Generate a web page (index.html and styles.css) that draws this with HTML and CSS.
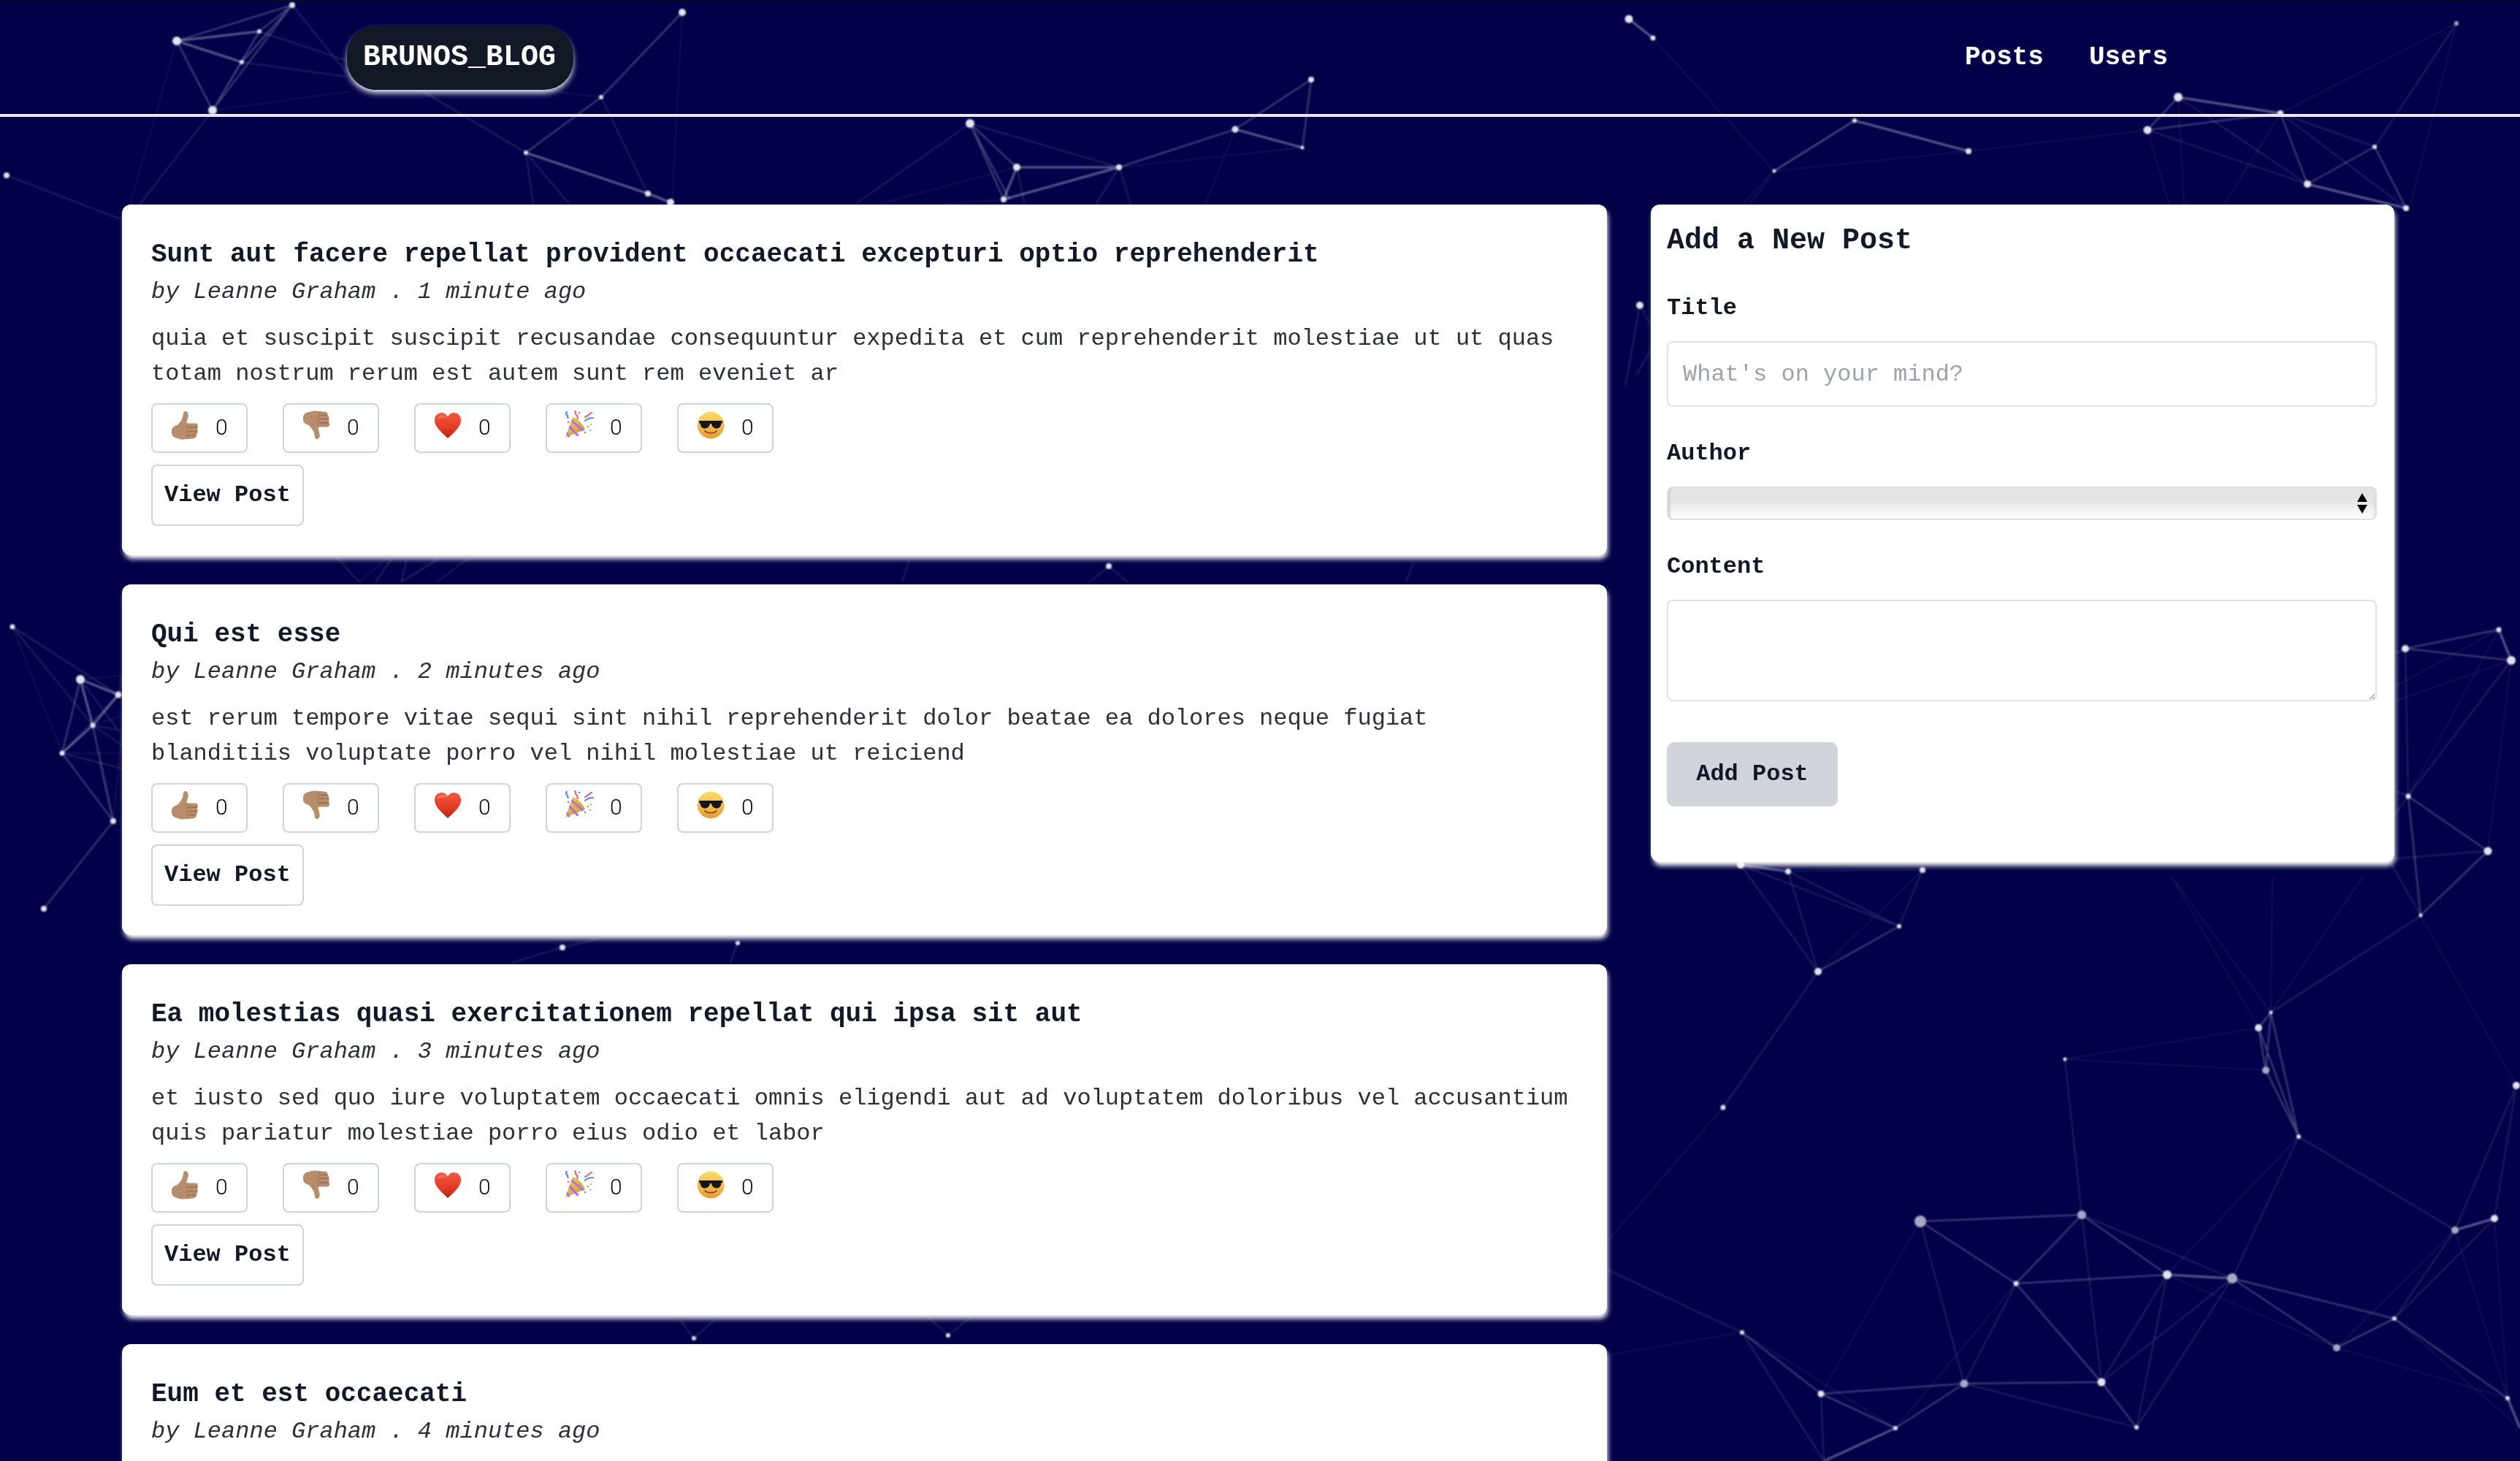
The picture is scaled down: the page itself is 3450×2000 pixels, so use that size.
FILE: index.html
```html
<!DOCTYPE html>
<html lang="en">
<head>
<meta charset="utf-8">
<title>Brunos Blog</title>
<link rel="stylesheet" href="styles.css">
</head>
<body>
<svg class="sprite" aria-hidden="true">
  <defs>
    <linearGradient id="heart-fill" x1="0" y1="0" x2="0" y2="1"><stop offset="0" stop-color="#f4593f"/><stop offset=".6" stop-color="#e23a27"/><stop offset="1" stop-color="#b81d10"/></linearGradient>
    <linearGradient id="face-fill" x1="0" y1="0" x2="0" y2="1"><stop offset="0" stop-color="#fbdc66"/><stop offset="1" stop-color="#eb9a35"/></linearGradient>
    <linearGradient id="cone-fill" x1="0" y1="0" x2="1" y2="1"><stop offset="0" stop-color="#f2cf62"/><stop offset="1" stop-color="#c9962c"/></linearGradient>
    <symbol id="e-up" viewBox="2 0.500 34 35.500">
      <path fill="#b88d6c" d="M3 25c0-3 2-5 5-6 3-1 6-5 8-9 1-3 1-7 2-8 3-2 6 1 5 6l-2 8h11c2 0 3 1.500 3 3 0 1-.5 2-1 3 1 1 1 3 0 4 .5 1 .5 3-1 4 .5 2-1 4-3 4.500l-12 1c-3 .5-6-.5-8-1.500-4 0-7-3-7-7z"/>
      <path fill="none" stroke="#8b6346" stroke-width="1" stroke-linecap="round" d="M23 21h11M23 26h11M23 30.500h9"/>
      <path fill="none" stroke="#a17a5b" stroke-width="1" stroke-linecap="round" d="M22 16c-1 4-2 12 1 18"/>
    </symbol>
    <symbol id="e-heart" viewBox="0 0 40 40">
      <path fill="url(#heart-fill)" d="M20 38C8 27 2 21 2 13 2 7 6 3 11.500 3 15 3 18.500 5 20 8.500 21.500 5 25 3 28.500 3 34 3 38 7 38 13c0 8-6 14-18 25z"/>
      <path fill="#ffffff" opacity=".2" d="M6 12c0-3 3-6 6-6 3 0 5 2 6 4-4-1-8 0-12 2z"/>
    </symbol>
    <symbol id="e-party" viewBox="0 0 40 40">
      <path fill="url(#cone-fill)" d="M1 37 11 9c6 1 14 9 17 17z"/>
      <path fill="#b76ce0" d="m3.500 29 4 7-2 .7-3.200-4.600zM7 20l13 14-3 1.300L5.800 23.500zM10 12l17 15-3 1.500L9 15z"/>
      <path fill="none" stroke="#5b86e6" stroke-width="2" stroke-linecap="round" d="M2 2c3 0-2 3 1 4s-1 3 2 4M28 14c3-3 6-4 11-4"/>
      <path fill="none" stroke="#e0607e" stroke-width="2" stroke-linecap="round" d="M14 1c3 2-1 3 2 5s0 3 2 5M28 9c1-2 3 0 3-2s3 0 3-2 2-1 3-2"/>
      <circle cx="32" cy="22" r="1.500" fill="#e8a34a"/><circle cx="35" cy="27" r="1.300" fill="#ea9ab0"/><circle cx="28" cy="30" r="1.200" fill="#5b86e6"/><circle cx="36" cy="19" r="1.200" fill="#e8a34a"/><circle cx="20" cy="3" r="1.200" fill="#5b86e6"/><circle cx="5" cy="16" r="1.300" fill="#e0607e"/>
    </symbol>
    <symbol id="e-cool" viewBox="0 0 40 40">
      <circle cx="20" cy="20" r="18.500" fill="url(#face-fill)"/>
      <path fill="#15151a" d="M4 14h32v3l-1.500.5c-.5 4.500-3 7-6.500 7s-6.500-2.500-7-6.500h-2c-.5 4-3.500 6.500-7 6.500S5.900 22 5.500 17.500L4 17z"/>
      <path fill="none" stroke="#7a4a18" stroke-width="1.800" stroke-linecap="round" d="M12 28c3 3.500 13 3.500 16 0"/>
    </symbol>
  </defs>
</svg>

<svg class="network" viewBox="0 0 3450 2000" preserveAspectRatio="none" aria-hidden="true">
  <path class="line-faint" d="M17 858L85 1031M155 1124L167 1000M291 151L480 125M823 133L760 125M934 17L920 280M242 56L178 280M1392 229L1200 280M1691 177L1650 280M1374 273L1290 280M1532 229L1783 202M2429 234L2385 280M2429 234L2395 280M2695 207L2940 178M2429 234L2695 207M2263 52L2429 234M3363 32L3122 155M3363 32L3300 280M3122 155L3045 280M2940 178L2970 280M2982 133L2990 280M3421 862L3278 940M3438 904L3278 960M3421 862L3297 1090M3438 904L3406 1165M3109 1386L2973 1200M3092 1407L2973 1200M3109 1386L3111 1200M3109 1386L3235 1200M3092 1407L2827 1450M3102 1465L2827 1450M3314 1254L3445 1486M2359 1516L2200 1700M2489 1330L2632 1191M2448 1193L2632 1191M3361 1684L3199 1845M3361 1684L3433 1914M3415 1668L3433 1914M2967 1745L3199 1845M3199 1845L3433 1914M3147 1556L2967 1745M2629 1672L2493 1908M2760 1757L2595 1955M2385 1824L2595 1955M2385 1824L2200 1855M3278 1805L3450 1955M162 951L167 925M110 930L167 925M127 993L167 980M85 1031L167 1031M155 1124L135 1040M528 765L492 797"/>
  <path class="line-soft" d="M17 858L162 951M17 858L127 993M110 930L162 1000M85 1031L167 1052M127 993L167 1020M127 993L167 1000M331 85L475 105M355 43L475 83M400 7L475 100M85 1031L162 951M720 209L730 280M720 209L780 280M823 133L887 265M574 122L720 209M9 240L165 300M291 151L191 280M1328 169L1170 280M1532 229L1500 280M1532 229L1548 280M1403 280L1392 229M1532 229L1328 169M2429 234L2539 165M2982 133L3159 252M2940 178L3159 252M3122 155L3251 201M3122 155L3294 285M3363 32L3251 201M3293 888L3297 1090M3297 1090L3438 904M3293 888L3278 895M3270 1176L3406 1165M3270 1176L3314 1253M3297 1090L3278 1082M3297 1090L3278 1115M2489 1330L2383 1184M2489 1330L2448 1193M2600 1268L2383 1184M2600 1268L2448 1193M2600 1268L2632 1191M2489 1330L2359 1516M3109 1386L3314 1254M3147 1556L3056 1750M3147 1556L3361 1684M2827 1450L2850 1663M3361 1684L3278 1805M3415 1668L3278 1805M3445 1486L3361 1684M3445 1486L3415 1668M2850 1663L2877 1892M2850 1663L3056 1750M2629 1672L2689 1894M2760 1757L2689 1894M2967 1745L2877 1892M2967 1745L2925 1954M3056 1750L2877 1892M3056 1750L2925 1954M2689 1894L2925 1954M2385 1824L2497 2000M2493 1908L2497 2000M2385 1824L2200 1738M536 765L514 797M557 765L549 797M600 765L549 797M640 765L598 797M1245 765L1235 797M1935 770L1925 797M460 762L492 797M2245 418L2260 445M2240 513L2260 480M2245 418L2225 530M770 1297L700 1318M770 1297L820 1285M1010 1291L1000 1318M1518 775L1490 798M1518 775L1545 798M950 1832L930 1805M950 1832L980 1805M1298 1828L1270 1802M1298 1828L1330 1802"/>
  <path class="line-mid" d="M242 56L400 7M355 43L400 7M331 85L400 7M291 151L400 7M291 151L355 43M291 151L331 85M242 56L291 151M934 17L823 133M823 133L720 209M110 930L85 1031M127 993L155 1124M85 1031L155 1124M155 1124L60 1244M1328 169L1392 229M1328 169L1374 273M1328 169L1382 273M1532 229L1691 177M1691 177L1795 109M1795 109L1783 202M2539 165L2429 234M2982 133L2940 178M2940 178L3122 155M3122 155L3159 252M3159 252L3251 201M3251 201L3294 285M3293 888L3421 862M3293 888L3438 904M3297 1090L3406 1165M3297 1090L3314 1253M3406 1165L3314 1253M2489 1330L2600 1268M3109 1386L3092 1407M3109 1386L3102 1465M3092 1407L3102 1465M3092 1407L3147 1556M3102 1465L3147 1556M3109 1386L3147 1556M3278 1805L3433 1914M3199 1845L3278 1805M3056 1750L3278 1805M3056 1750L3199 1845M2629 1672L2850 1663M2629 1672L2760 1757M2760 1757L2850 1663M2850 1663L2967 1745M2760 1757L2967 1745M2760 1757L2877 1892M2689 1894L2877 1892M2493 1908L2689 1894M2493 1908L2595 1955M2385 1824L2493 1908M2689 1894L2595 1955M2877 1892L2925 1954"/>
  <path class="line-bright" d="M242 56L355 43M242 56L331 85M720 209L887 265M887 265L918 277M110 930L162 951M110 930L127 993M85 1031L127 993M127 993L162 951M1392 229L1532 229M1392 229L1374 273M1532 229L1374 273M1691 177L1783 202M2230 26L2263 52M2539 165L2695 207M2982 133L3122 155M3159 252L3294 285M3421 862L3438 904M3361 1684L3415 1668M2967 1745L3056 1750M2595 1955L2497 2000M2383 1184L2448 1193M3433 1914L3450 1955"/>
  <g class="node">
    <circle cx="400" cy="7" r="4"/><circle cx="242" cy="56" r="6"/><circle cx="355" cy="43" r="3"/><circle cx="331" cy="85" r="3"/><circle cx="291" cy="151" r="6"/><circle cx="934" cy="17" r="5"/><circle cx="823" cy="133" r="3"/><circle cx="720" cy="209" r="3"/><circle cx="887" cy="265" r="4"/><circle cx="918" cy="277" r="5"/><circle cx="9" cy="240" r="4"/>
    <circle cx="17" cy="858" r="3.500"/><circle cx="110" cy="930" r="6"/><circle cx="162" cy="951" r="4.500"/><circle cx="127" cy="993" r="3.500"/><circle cx="85" cy="1031" r="3.500"/><circle cx="155" cy="1124" r="4"/><circle cx="60" cy="1244" r="4"/>
    <circle cx="1328" cy="169" r="6"/><circle cx="1392" cy="229" r="5"/><circle cx="1532" cy="229" r="4"/><circle cx="1691" cy="177" r="4.500"/><circle cx="1795" cy="109" r="4"/><circle cx="1783" cy="202" r="2.500"/><circle cx="1374" cy="273" r="4"/>
    <circle cx="2230" cy="26" r="5.500"/><circle cx="2263" cy="52" r="3.500"/><circle cx="2429" cy="234" r="2.500"/><circle cx="2539" cy="165" r="3"/><circle cx="2695" cy="207" r="4"/><circle cx="2940" cy="178" r="5.500"/><circle cx="2982" cy="133" r="6"/><circle cx="3122" cy="155" r="4"/><circle cx="3251" cy="201" r="3"/><circle cx="3159" cy="252" r="5"/><circle cx="3294" cy="285" r="4"/><circle class="node-dim" cx="3363" cy="32" r="3"/>
    <circle cx="3293" cy="888" r="5"/><circle cx="3421" cy="862" r="3.500"/><circle cx="3438" cy="904" r="6"/><circle cx="3297" cy="1090" r="3.500"/><circle cx="3406" cy="1165" r="5.500"/><circle cx="3314" cy="1253" r="2.500"/>
    <circle cx="2383" cy="1184" r="5"/><circle cx="2448" cy="1193" r="4"/><circle cx="2632" cy="1191" r="4"/><circle cx="2489" cy="1330" r="5"/><circle cx="2600" cy="1268" r="3"/><circle cx="2359" cy="1516" r="3.500"/>
    <circle cx="3109" cy="1386" r="2.500"/><circle cx="3092" cy="1407" r="5"/><circle class="node-dim" cx="3102" cy="1465" r="5"/><circle cx="3147" cy="1556" r="3"/><circle cx="2827" cy="1450" r="2.500"/><circle cx="3445" cy="1486" r="5"/>
    <circle class="node-dim" cx="2629" cy="1672" r="8"/><circle class="node-dim" cx="2850" cy="1663" r="6"/><circle cx="2760" cy="1757" r="3.500"/><circle cx="2967" cy="1745" r="6"/><circle class="node-dim" cx="3056" cy="1750" r="7"/><circle class="node-dim" cx="3199" cy="1845" r="5"/><circle cx="3278" cy="1805" r="3"/><circle class="node-dim" cx="3361" cy="1684" r="5"/><circle cx="3415" cy="1668" r="5"/><circle cx="3433" cy="1914" r="3"/><circle cx="2385" cy="1824" r="3"/><circle cx="2493" cy="1908" r="4.500"/><circle class="node-dim" cx="2689" cy="1894" r="5.500"/><circle cx="2877" cy="1892" r="5.500"/><circle cx="2595" cy="1955" r="3"/><circle cx="2925" cy="1954" r="3"/>
    <circle cx="2245" cy="418" r="5"/><circle cx="1518" cy="775" r="4"/><circle cx="770" cy="1297" r="4"/><circle cx="1010" cy="1291" r="3"/><circle cx="950" cy="1832" r="3"/><circle cx="1298" cy="1828" r="3"/>
  </g>
</svg>

<header class="site-header">
  <div class="logo">BRUNOS_BLOG</div>
  <nav class="site-nav"><a href="#">Posts</a><a href="#">Users</a></nav>
</header>

<main class="layout">
  <section class="post-list">
    <article class="post-card">
      <h3 class="post-title">Sunt aut facere repellat provident occaecati excepturi optio reprehenderit</h3>
      <p class="post-meta">by Leanne Graham . 1 minute ago</p>
      <p class="post-body">quia et suscipit suscipit recusandae consequuntur expedita et cum reprehenderit molestiae ut ut quas totam nostrum rerum est autem sunt rem eveniet ar</p>
      <div class="reactions">
        <button class="reaction"><svg class="emoji"><use href="#e-up"/></svg><span>0</span></button>
        <button class="reaction"><svg class="emoji emoji-flip"><use href="#e-up"/></svg><span>0</span></button>
        <button class="reaction"><svg class="emoji"><use href="#e-heart"/></svg><span>0</span></button>
        <button class="reaction"><svg class="emoji"><use href="#e-party"/></svg><span>0</span></button>
        <button class="reaction"><svg class="emoji"><use href="#e-cool"/></svg><span>0</span></button>
      </div>
      <button class="view-post">View Post</button>
    </article>
    <article class="post-card">
      <h3 class="post-title">Qui est esse</h3>
      <p class="post-meta">by Leanne Graham . 2 minutes ago</p>
      <p class="post-body">est rerum tempore vitae sequi sint nihil reprehenderit dolor beatae ea dolores neque fugiat blanditiis voluptate porro vel nihil molestiae ut reiciend</p>
      <div class="reactions">
        <button class="reaction"><svg class="emoji"><use href="#e-up"/></svg><span>0</span></button>
        <button class="reaction"><svg class="emoji emoji-flip"><use href="#e-up"/></svg><span>0</span></button>
        <button class="reaction"><svg class="emoji"><use href="#e-heart"/></svg><span>0</span></button>
        <button class="reaction"><svg class="emoji"><use href="#e-party"/></svg><span>0</span></button>
        <button class="reaction"><svg class="emoji"><use href="#e-cool"/></svg><span>0</span></button>
      </div>
      <button class="view-post">View Post</button>
    </article>
    <article class="post-card">
      <h3 class="post-title">Ea molestias quasi exercitationem repellat qui ipsa sit aut</h3>
      <p class="post-meta">by Leanne Graham . 3 minutes ago</p>
      <p class="post-body">et iusto sed quo iure voluptatem occaecati omnis eligendi aut ad voluptatem doloribus vel accusantium quis pariatur molestiae porro eius odio et labor</p>
      <div class="reactions">
        <button class="reaction"><svg class="emoji"><use href="#e-up"/></svg><span>0</span></button>
        <button class="reaction"><svg class="emoji emoji-flip"><use href="#e-up"/></svg><span>0</span></button>
        <button class="reaction"><svg class="emoji"><use href="#e-heart"/></svg><span>0</span></button>
        <button class="reaction"><svg class="emoji"><use href="#e-party"/></svg><span>0</span></button>
        <button class="reaction"><svg class="emoji"><use href="#e-cool"/></svg><span>0</span></button>
      </div>
      <button class="view-post">View Post</button>
    </article>
    <article class="post-card post-card-cut">
      <h3 class="post-title">Eum et est occaecati</h3>
      <p class="post-meta">by Leanne Graham . 4 minutes ago</p>
    </article>
  </section>

  <aside class="form-card">
    <h2 class="form-title">Add a New Post</h2>
    <form>
      <div class="field">
        <label class="field-label" for="post-title">Title</label>
        <input class="text-input" id="post-title" type="text" placeholder="What's on your mind?">
      </div>
      <div class="field">
        <label class="field-label" for="post-author">Author</label>
        <div class="select-wrap">
          <select class="select-input" id="post-author"><option></option></select>
          <svg class="select-arrows" viewBox="0 0 14 28" aria-hidden="true"><path d="M7 0l7 12H0zM0 16h14L7 28z"/></svg>
        </div>
      </div>
      <div class="field field-last">
        <label class="field-label" for="post-content">Content</label>
        <textarea class="text-area" id="post-content"></textarea>
      </div>
      <button class="add-post" type="button">Add Post</button>
    </form>
  </aside>
</main>
</body>
</html>
```
FILE: styles.css
```css
* { box-sizing: border-box; }

html, body {
  height: 100%;
  margin: 0;
  overflow: hidden;
}

body {
  background: #010048;
  color: #111827;
  font-family: "Liberation Mono", "Courier New", monospace;
  font-size: 32px;
  line-height: 48px;
}

.sprite {
  position: absolute;
  width: 0;
  height: 0;
}

.network {
  position: fixed;
  inset: 0;
  width: 100%;
  height: 100%;
  filter: blur(1.2px);
}

.network path {
  fill: none;
  stroke: #d9d9f2;
}

.line-faint { stroke-width: 1.5; opacity: 0.11; }
.line-soft { stroke-width: 1.5; opacity: 0.2; }
.line-mid { stroke-width: 2; opacity: 0.32; }
.line-bright { stroke-width: 3; opacity: 0.42; }

.node circle { fill: #e4e4f0; }
.node .node-dim { fill: #a8a8c4; }

.site-header {
  position: relative;
  height: 160px;
  padding: 0 482px 0 475px;
  display: flex;
  align-items: center;
  justify-content: space-between;
  border-top: 1px solid #0b0b20;
  border-bottom: 4px solid #e8e8ee;
}

.logo {
  padding: 20px 24px 20px 22px;
  border-radius: 40px;
  background: #131827;
  color: #fff;
  font-size: 40px;
  font-weight: 700;
  box-shadow: 0 5px 8px -1px #fff;
}

.site-nav {
  display: flex;
  gap: 62px;
}

.site-nav a {
  color: #fff;
  font-size: 36px;
  font-weight: 700;
  text-decoration: none;
}

.layout {
  position: relative;
  display: grid;
  grid-template-columns: 2033px 1018px;
  gap: 60px;
  align-items: start;
  padding: 120px 0 0 167px;
}

.post-list {
  display: flex;
  flex-direction: column;
  gap: 40px;
}

.post-card,
.form-card {
  background: #fff;
  border-radius: 12px;
  box-shadow: 2px 6px 7px -1px #fff;
}

.post-card { padding: 40px; }
.post-card-cut { height: 480px; }

.post-title {
  margin: 0 0 -1px;
  padding-top: 1px;
  font-size: 36px;
  line-height: 56px;
  font-weight: 700;
}

.post-meta {
  margin: 0;
  font-style: italic;
  color: #2a2f3a;
}

.post-body {
  margin: 16px 0;
  color: #2a2f3a;
}

.reactions {
  display: flex;
  gap: 48px;
  margin-bottom: 16px;
}

.reaction {
  display: flex;
  align-items: center;
  gap: 22px;
  width: 132px;
  height: 68px;
  padding: 0 0 3px 24px;
  background: #fff;
  border: 2px solid #cbd5e1;
  border-radius: 8px;
  color: #020617;
  font-family: Roboto, "Liberation Sans", sans-serif;
  font-size: 30px;
  font-weight: 300;
}

.emoji {
  width: 40px;
  height: 40px;
  flex: none;
  margin-bottom: 6px;
}

.emoji-flip { transform: scaleY(-1); }

.view-post {
  display: block;
  padding: 16px;
  background: #fff;
  border: 2px solid #cbd5e1;
  border-radius: 8px;
  color: #111827;
  font: 700 32px/48px "Liberation Mono", "Courier New", monospace;
}

.form-card {
  height: 900px;
  padding: 24px 24px 24px 22px;
}

.form-title {
  margin: 0 0 43px;
  padding-top: 1px;
  font-size: 40px;
  line-height: 50px;
  font-weight: 700;
}

.field { margin-bottom: 40px; }
.field-last { margin-bottom: 56px; }

.field-label {
  display: block;
  margin-bottom: 21px;
  font-weight: 700;
}

.text-input,
.text-area {
  display: block;
  width: 100%;
  padding: 0 20px;
  background: #fff;
  border: 2px solid #e2e2e4;
  border-radius: 8px;
  font: 32px/48px "Liberation Mono", "Courier New", monospace;
  outline: none;
}

.text-input { height: 90px; }
.text-input::placeholder { color: #9ca3af; opacity: 1; }
.text-area { height: 139px; padding-top: 16px; resize: both; }

.select-wrap { position: relative; }

.select-input {
  display: block;
  width: 100%;
  height: 46px;
  appearance: none;
  background: linear-gradient(#e4e4e4, #e6e6e6 45%, #f8f8f8 85%, #fff);
  border: 2px solid #dfdfe1;
  border-radius: 8px;
  box-shadow: inset 4px 0 3px -2px #c9c9c9, inset -3px 0 3px -2px #d6d6d6;
}

.select-arrows {
  position: absolute;
  top: 9px;
  right: 13px;
  width: 14px;
  height: 28px;
  fill: #000;
}

.add-post {
  display: block;
  width: 234px;
  height: 88px;
  padding: 0;
  background: #d1d5db;
  border: 0;
  border-radius: 10px;
  color: #111827;
  font: 700 32px/48px "Liberation Mono", "Courier New", monospace;
}
```
